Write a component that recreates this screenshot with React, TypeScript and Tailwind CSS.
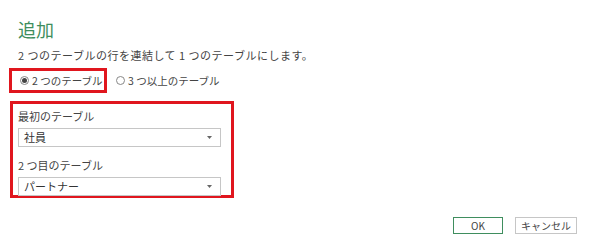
import React from "react";

const font = { fontFamily: '"Noto Sans CJK JP", "Noto Sans", sans-serif' };

function Radio({ checked, label }: { checked?: boolean; label: string }) {
  return (
    <label className="flex items-center gap-[3px] whitespace-nowrap text-[10.5px] text-[#444]">
      <span className="flex h-[9px] w-[9px] items-center justify-center rounded-full border border-[#888] bg-white">
        {checked && <span className="h-[5px] w-[5px] rounded-full bg-[#444]" />}
      </span>
      <span>{label}</span>
    </label>
  );
}

function Select({ value }: { value: string }) {
  return (
    <div className="flex h-[19px] w-[203px] items-center justify-between border border-[#c6c6c6] bg-white pl-[5px] pr-[8px] text-[11px] text-[#333]">
      <span>{value}</span>
      <svg width="5" height="3" viewBox="0 0 5 3">
        <path d="M0 0 L5 0 L2.5 3 Z" fill="#666" />
      </svg>
    </div>
  );
}

export default function App() {
  return (
    <div className="h-[250px] w-[590px] bg-white" style={font}>
      <div className="flex flex-col pl-[18px] pt-[17px]">
        <h1 className="text-[18px] leading-[24px] text-[#3f8e5e]">追加</h1>
        <p className="mt-[6px] text-[11px] leading-[16px] tracking-[0.5px] text-[#444]">
          2 つのテーブルの行を連結して 1 つのテーブルにします。
        </p>
        <div className="ml-[-9px] mt-[5px] flex items-center gap-[9px]">
          <div className="flex h-[25px] w-[98px] items-center border-[3px] border-[#e0161e] pl-[8px]">
            <Radio checked label="2 つのテーブル" />
          </div>
          <Radio label="3 つ以上のテーブル" />
        </div>
        <div className="ml-[-8px] mt-[8px] flex h-[97px] w-[224px] flex-col border-[3px] border-[#e0161e] pl-[5px] pt-[4px]">
          <span className="text-[11px] leading-[16px] text-[#444]">最初のテーブル</span>
          <div className="mt-[4px]">
            <Select value="社員" />
          </div>
          <span className="mt-[10px] text-[11px] leading-[16px] text-[#444]">2 つ目のテーブル</span>
          <div className="mt-[4px]">
            <Select value="パートナー" />
          </div>
        </div>
      </div>
      <div className="mt-[19px] flex justify-end gap-[12px] pr-[13px]">
        <button className="h-[17px] w-[50px] border border-[#3f8e5e] bg-white text-[10px] text-[#444]">OK</button>
        <button className="h-[17px] w-[62px] border border-[#c6c6c6] bg-white text-[10px] text-[#444]">キャンセル</button>
      </div>
    </div>
  );
}
